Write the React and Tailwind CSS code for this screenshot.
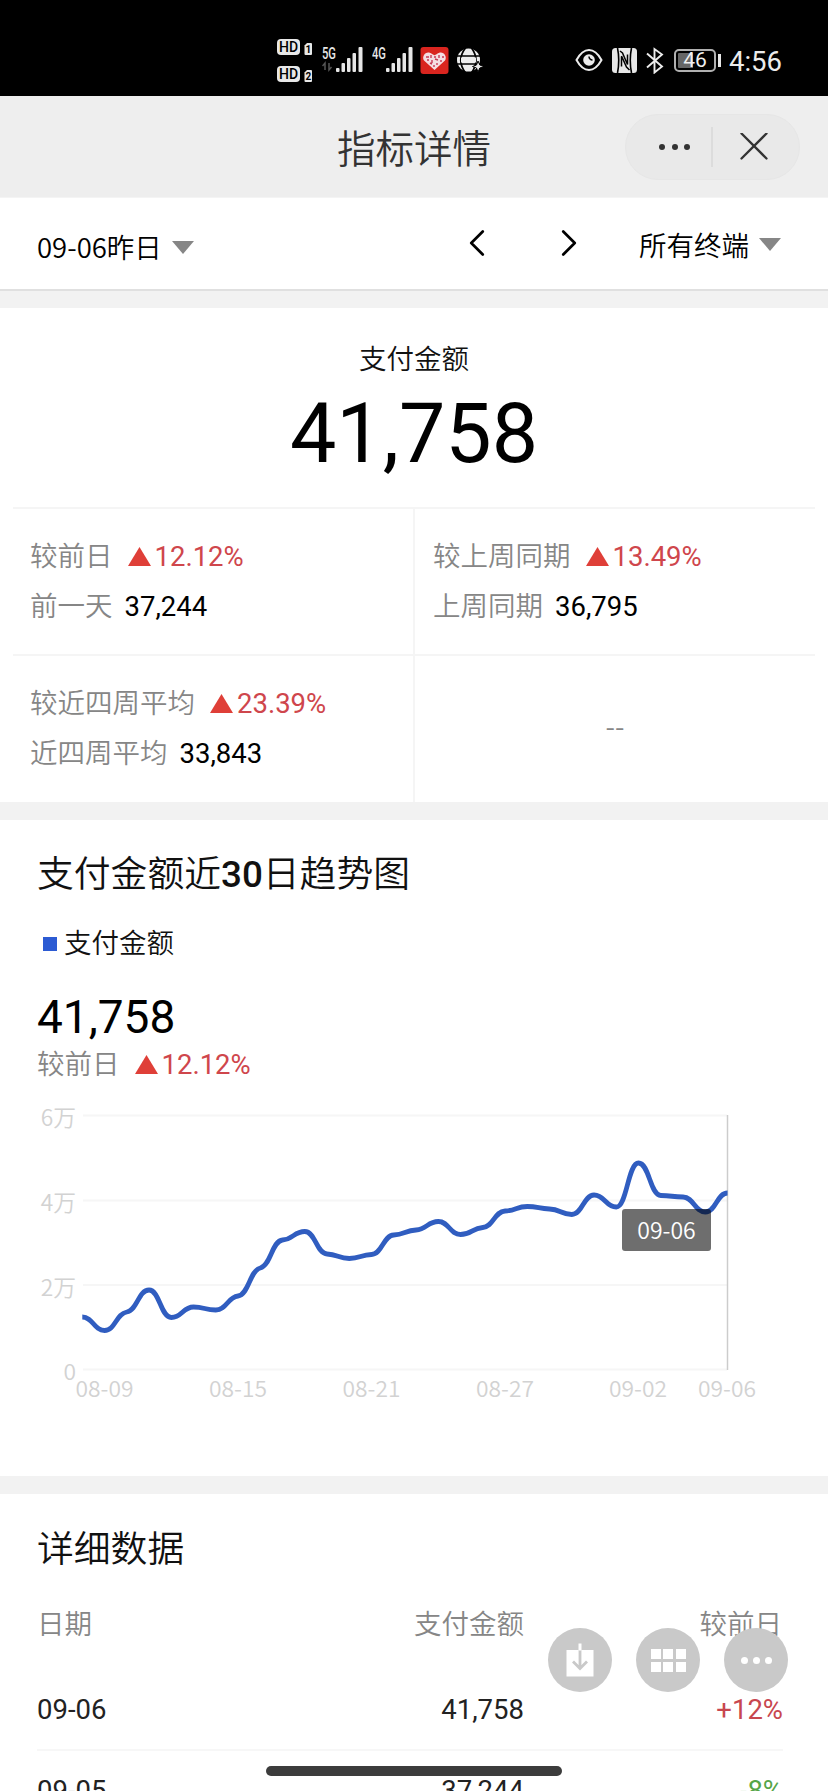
import { ChevronLeft, ChevronRight } from "lucide-react";

const compares = [
  { label: "较前日", rate: "12.12%", base: "前一天", value: "37,244" },
  { label: "较上周同期", rate: "13.49%", base: "上周同期", value: "36,795" },
  { label: "较近四周平均", rate: "23.39%", base: "近四周平均", value: "33,843" },
];

// plot coordinates of the 30 days, one every 22.25px
const trend = [
  1317, 1330.5, 1312, 1290, 1317.5, 1307, 1310, 1296, 1268, 1240, 1231.5, 1254,
  1258.5, 1254.5, 1235, 1230, 1221.5, 1234.5, 1227.5, 1211, 1206.5, 1209,
  1214.5, 1195, 1207, 1163, 1195.5, 1197, 1212, 1193,
].map((y, i) => [82.3 + i * 22.25, y - 1100]);

const ticks = [
  { x: 104.5, text: "08-09" },
  { x: 238, text: "08-15" },
  { x: 371.5, text: "08-21" },
  { x: 505, text: "08-27" },
  { x: 638, text: "09-02" },
  { x: 727, text: "09-06" },
];

const levels = [
  { y: 15.5, text: "6万" },
  { y: 100.5, text: "4万" },
  { y: 185, text: "2万" },
  { y: 269.5, text: "0" },
];

const rows = [
  { date: "09-06", value: "41,758", rate: "+12%", color: "text-[#c8474f]" },
  { date: "09-05", value: "37,244", rate: "-8%", color: "text-[#55a548]" },
];

function smoothPath(points) {
  const slope = points.map((p, i) => {
    const prev = points[i - 1];
    const next = points[i + 1];
    if (!prev || !next) return 0;
    const a = p[1] - prev[1];
    const b = next[1] - p[1];
    if (a * b <= 0) return 0;
    return Math.sign(a) * Math.min(Math.abs(a), Math.abs(b)) * 0.2;
  });
  return points
    .map(([x, y], i) => {
      if (i === 0) return `M${x} ${y}`;
      const [px, py] = points[i - 1];
      const d = (x - px) * 0.48;
      return `C${px + d} ${py + slope[i - 1] * 0.48} ${x - d} ${y - slope[i] * 0.48} ${x} ${y}`;
    })
    .join("");
}

function Hd({ num }) {
  return (
    <svg width="37" height="18" viewBox="0 0 37 18">
      <rect x="1" y="1" width="23" height="16" rx="4" fill="#e8e8e8" />
      <text x="12.500" y="14" textAnchor="middle" fontSize="14" fontWeight="500" fill="#000" fontFamily="Roboto">
        HD
      </text>
      <path d="M31 5h4q1 0 1 1v10q0 1-1 1h-5.500q-1 0-1-1V7.500z" fill="#e8e8e8" />
      <text x="32.300" y="15" textAnchor="middle" fontSize="10" fontWeight="700" fill="#000" fontFamily="Roboto">
        {num}
      </text>
    </svg>
  );
}

function Signal({ name, arrows }) {
  return (
    <svg width="41" height="28" viewBox="0 0 41 28">
      <text x="0" y="14" fontSize="16" fontWeight="500" fill="#e6e6e6" fontFamily="Roboto" textLength="14" lengthAdjust="spacingAndGlyphs">
        {name}
      </text>
      {arrows && <path d="M3 25v-7l-2.500 3M7 18v7l2.500-3" fill="none" stroke="#555" strokeWidth="1.500" />}
      <g fill="#e6e6e6">
        <rect x="14" y="23" width="3.500" height="4" rx="1" />
        <rect x="19.500" y="18" width="3.500" height="9" rx="1" />
        <rect x="25" y="13" width="3.500" height="14" rx="1" />
        <rect x="30.500" y="8" width="3.500" height="19" rx="1" />
        <rect x="36.500" y="2" width="4" height="25" rx="1" />
      </g>
    </svg>
  );
}

function StatusBar() {
  return (
    <div className="flex h-24 items-start bg-black pt-[38px] pl-[276px]">
      <div className="flex w-[46px] flex-col gap-[9px]">
        <Hd num="1" />
        <Hd num="2" />
      </div>
      <div className="flex pt-[7px]">
        <Signal name="5G" arrows />
        <span className="w-[9px]" />
        <Signal name="4G" />
      </div>
      <svg className="mt-[8px] ml-[7px]" width="29" height="29" viewBox="0 0 29 29">
        <rect x="0.500" y="1" width="28" height="27" rx="3" fill="#d9251f" />
        <path d="M14.500 24L4 14.500c-3-5 3-11 8-6.500l2.500 1.200L17 8c5-4.500 11 1.500 8 6.500z" fill="#f4dde2" />
        <path d="M6 11h3M11 9v3M14 11h2M19 9v3M22 11h2M7 14h2M12 14v3M15 13l3 1M21 14v2M10 17l2 1M17 17v2M14 19v2" stroke="#c83a55" strokeWidth="1.400" fill="none" />
      </svg>
      <svg className="mt-[10px] ml-[7px]" width="28" height="26" viewBox="0 0 28 26">
        <circle cx="12.500" cy="12" r="11.500" fill="#ececec" />
        <path d="M0 8h25M0 16h25M9.500 0Q0 12 9.500 25M15.500 0q9 12 0 25" stroke="#000" strokeWidth="1.700" fill="none" />
        <path d="M5 9.500h15v5H5z" fill="#ececec" />
        <path d="M22 13l1.800 4 4.200 1.500-4.200 1.500L22 24l-1.500-4-4-1.500 4-1.500z" fill="#ececec" stroke="#000" strokeWidth="1" />
      </svg>
      <svg className="mt-[10px] ml-[91px]" width="28" height="24" viewBox="0 0 28 24">
        <path d="M1.500 12Q7 2 14 2t12.500 10Q21 22 14 22T1.500 12z" fill="none" stroke="#ececec" strokeWidth="2" />
        <circle cx="14" cy="12" r="5.800" fill="#ececec" />
        <path d="M14 8.500a3.500 3.500 0 0 0 3.500 3.500" stroke="#000" strokeWidth="1.500" fill="none" />
      </svg>
      <svg className="mt-[9px] ml-[8px]" width="27" height="27" viewBox="0 0 27 27">
        <rect x="1" y="1" width="25" height="25" rx="3.500" fill="#e8e8e8" />
        <path d="M6.500 1q2.500 12 0 25M20.500 1q-2.500 12 0 25" fill="none" stroke="#000" strokeWidth="1.600" />
        <path d="M9 4l2.500 2 5 11.500V7.500M10.500 9.500v10M10.500 9l5 11 3 3" fill="none" stroke="#000" strokeWidth="1.500" />
      </svg>
      <svg className="mt-[9px] ml-[8px]" width="18" height="27" viewBox="0 0 18 27">
        <path d="M1 6.500l15 13-7.500 6V2l7.500 5.500L1 20.500" fill="none" stroke="#ececec" strokeWidth="1.900" />
      </svg>
      <div className="mt-[11px] ml-[10px] flex items-center gap-[2px]">
        <div className="flex h-[23px] w-[42px] items-center justify-center rounded-[5px] border-2 border-[#b0b0b0] bg-linear-to-r from-[#666666] from-46% to-black to-46% bg-clip-content p-[2px] font-[Roboto] text-[21px] leading-none font-normal text-[#f0f0f0]">
          46
        </div>
        <div className="h-[13px] w-[3px] bg-[#e8e8e8]" />
      </div>
      <div className="mt-[9px] ml-[8px] font-[Roboto] text-[27.500px] leading-[30px] font-normal text-[#ececec]">
        4:56
      </div>
    </div>
  );
}

function NavBar() {
  return (
    <div className="grid h-[102px] grid-cols-[1fr_auto_1fr] items-center border-b border-[#f4f4f4] bg-[#eeeeee]">
      <span />
      <h1 className="text-[38.500px] leading-none text-[#333333]">指标详情</h1>
      <div className="mr-[28px] flex h-[66px] w-[175px] items-center justify-self-end rounded-full border border-[#e6e6e6] bg-[#e9e9e9]">
        <div className="flex w-[85px] justify-center gap-[6.500px] pl-[12px]">
          <i className="size-[6px] rounded-full bg-[#333333]" />
          <i className="size-[6px] rounded-full bg-[#333333]" />
          <i className="size-[6px] rounded-full bg-[#333333]" />
        </div>
        <div className="h-10 w-0.5 bg-[#dcdcdc]" />
        <svg className="ml-[27px]" width="28" height="28" viewBox="0 0 28 28">
          <path d="M1.500 0.500l25 25M26.500 0.500l-25 25" stroke="#333" strokeWidth="2.300" strokeLinecap="round" />
        </svg>
      </div>
    </div>
  );
}

function Caret() {
  return (
    <svg width="22" height="13" viewBox="0 0 22 13">
      <path d="M0 0h22L11 13z" fill="#868686" />
    </svg>
  );
}

function Rate({ children }) {
  return (
    <span className="flex items-baseline gap-[4px] font-[Roboto] font-normal text-[#cf464c]">
      <svg width="23" height="19" viewBox="0 0 23 19">
        <path d="M11.500 0L23 19H0z" fill="#df3f38" />
      </svg>
      {children}
    </span>
  );
}

function FilterBar() {
  return (
    <div className="flex h-[93px] items-center border-b-2 border-[#e0e0e0] bg-white pl-[37px] text-black">
      <div className="flex w-[426px] items-center gap-[10px] pt-[7px]">
        <span>09-06昨日</span>
        <Caret />
      </div>
      <div className="flex w-[176px] items-center gap-[46px] pb-[2px]">
        <ChevronLeft size={46} strokeWidth={1.4} className="-ml-[9px]" />
        <ChevronRight size={46} strokeWidth={1.4} />
      </div>
      <div className="flex items-center gap-[10px] pt-[2px]">
        <span>所有终端</span>
        <Caret />
      </div>
    </div>
  );
}

function Summary() {
  return (
    <section className="bg-white px-[13px] pt-[35px]">
      <div className="text-center leading-[28px] text-[#111111]">支付金额</div>
      <div className="mt-[10px] text-center font-[Roboto] text-[82.500px] leading-[106px] font-normal text-black">
        41,758
      </div>
      <div className="mt-[20px] grid grid-cols-[402px_400px] border-t-2 border-[#f5f5f5]">
        {compares.map((item, i) => (
          <div
            key={item.label}
            className={
              "flex flex-col gap-[10px] border-[#f5f5f5] pt-[25px] leading-[40px] " +
              (i === 0 ? "h-[147px] border-r-2 border-b-2 pl-[17px]" : i === 1 ? "h-[147px] border-b-2 pl-[18px]" : "h-[146px] border-r-2 pl-[17px]")
            }
          >
            <div className="flex h-10 items-baseline gap-[15px]">
              <span className="text-[#868686]">{item.label}</span>
              <Rate>{item.rate}</Rate>
            </div>
            <div className="flex h-10 items-baseline gap-[12px]">
              <span className="text-[#868686]">{item.base}</span>
              <span className="font-[Roboto] font-normal text-black">{item.value}</span>
            </div>
          </div>
        ))}
        <div className="flex items-center justify-center pb-[6px] text-[#868686]">--</div>
      </div>
    </section>
  );
}

function Trend() {
  return (
    <section className="h-[656px] bg-white pt-[34px]">
      <h2 className="pl-[37px] font-[Roboto,'Noto_Sans_CJK_SC'] text-[36.800px] leading-[42px] text-[#111111]">
        支付金额近<span className="font-medium">30</span>日趋势图
      </h2>
      <div className="mt-[25px] flex items-center gap-[7px] pl-[43px] leading-[40px] text-[#111111]">
        <i className="mt-[5px] size-[14px] bg-[#2c5bd3]" />
        支付金额
      </div>
      <div className="mt-[29px] pl-[37px] font-[Roboto] text-[46px] leading-[54px] font-normal text-black">
        41,758
      </div>
      <div className="-mt-[2px] flex h-10 items-baseline gap-[15px] pl-[37px] leading-[40px]">
        <span className="text-[#868686]">较前日</span>
        <Rate>12.12%</Rate>
      </div>
      <div className="relative mt-[18px] h-[320px]">
        <svg width="828" height="320" viewBox="0 0 828 320" fontFamily="'Noto Sans CJK SC'" fontSize="22.800" fontWeight="350" fill="#d2d2d2">
          {levels.map((l) => (
            <g key={l.text}>
              <path d={`M83 ${l.y}H727`} stroke="#f6f6f6" strokeWidth="2" />
              <text x="76" y={l.y + 10.5} textAnchor="end">
                {l.text}
              </text>
            </g>
          ))}
          <path d="M727.500 15V270" stroke="#cccccc" strokeWidth="1.500" />
          {ticks.map((t) => (
            <text key={t.text} x={t.x} y="297" textAnchor="middle">
              {t.text}
            </text>
          ))}
          <path d={smoothPath(trend)} fill="none" stroke="#305dc0" strokeWidth="4.800" />
        </svg>
        <div className="absolute top-[109px] left-[622px] flex h-[42px] w-[89px] items-center justify-center rounded-[3px] bg-black/57 pb-px text-[23px] leading-none text-white">
          09-06
        </div>
      </div>
    </section>
  );
}

function Detail() {
  return (
    <section className="h-[297px] overflow-hidden bg-white pt-[33px] pr-[45px] pl-[37px]">
      <h2 className="text-[36.800px] leading-[38px] text-[#111111]">详细数据</h2>
      <div className="mt-[37px] grid h-[68px] grid-cols-[1fr_300px_257px] text-right leading-[40px] text-[#868686]">
        <span className="text-left">日期</span>
        <span className="pr-[2px]">支付金额</span>
        <span className="pr-px">较前日</span>
      </div>
      {rows.map((row) => (
        <div
          key={row.date}
          className="grid h-[81px] grid-cols-[1fr_300px_257px] items-center border-b-2 border-[#f7f7f7] text-right font-[Roboto] font-normal text-[#222222]"
        >
          <span className="text-left">{row.date}</span>
          <span className="pr-[2px]">{row.value}</span>
          <span className={row.color}>{row.rate}</span>
        </div>
      ))}
    </section>
  );
}

function FloatingButtons() {
  return (
    <div className="absolute top-[1628px] left-[548px] flex gap-[24px]">
      <button className="flex size-16 items-center justify-center rounded-full bg-[#c9c9c9]">
        <svg width="28" height="36" viewBox="0 0 28 36">
          <rect x="0.500" y="8" width="27" height="26.500" fill="#fff" />
          <path d="M14 8v18M7 19.500l7 7 7-7" fill="none" stroke="#c9c9c9" strokeWidth="2.800" />
          <path d="M14 1.500v7" stroke="#fff" strokeWidth="3" />
        </svg>
      </button>
      <button className="flex size-16 items-center justify-center rounded-full bg-[#c9c9c9]">
        <span className="grid grid-cols-3 gap-x-[2.500px] gap-y-[3px]">
          {[0, 1, 2, 3, 4, 5].map((n) => (
            <i key={n} className="h-[10px] w-[10px] bg-white" />
          ))}
        </span>
      </button>
      <button className="flex size-16 items-center justify-center gap-[5px] rounded-full bg-[#c9c9c9]">
        <i className="size-[7px] rounded-full bg-white" />
        <i className="size-[7px] rounded-full bg-white" />
        <i className="size-[7px] rounded-full bg-white" />
      </button>
    </div>
  );
}

export default function App() {
  return (
    <div className="relative flex h-[1791px] w-[828px] flex-col overflow-hidden bg-[#f2f2f2] font-['Noto_Sans_CJK_SC',sans-serif] text-[27.500px] font-[350]">
      <StatusBar />
      <NavBar />
      <FilterBar />
      <main className="mt-[17px] flex flex-col gap-[18px]">
        <Summary />
        <Trend />
        <Detail />
      </main>
      <FloatingButtons />
      <div className="absolute top-[1766px] left-[266px] h-[10px] w-[296px] rounded-full bg-[#3c3c3c]" />
    </div>
  );
}
